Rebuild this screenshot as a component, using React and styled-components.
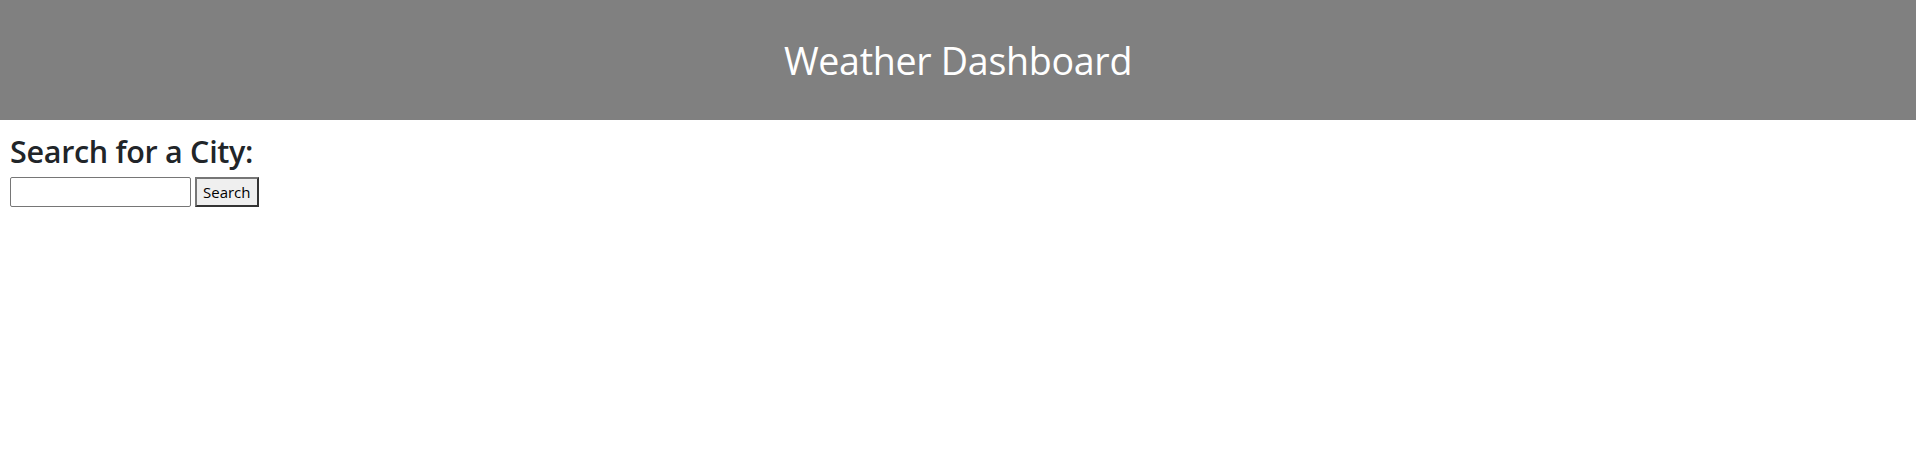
import React, { useState } from 'react';
import styled, { createGlobalStyle } from 'styled-components';

const GlobalStyle = createGlobalStyle`
  body {
    margin: 0;
    background: #fff;
    color: #212529;
    font-family: 'Open Sans', 'Noto Sans', sans-serif;
  }
`;

const Header = styled('header')`
  display: flex;
  justify-content: center;
  align-items: center;
  height: 120px;
  background: #808080;

  h1 {
    margin: 0;
    color: #fff;
    font-size: 37.6px;
    font-weight: 400;
    letter-spacing: -0.3px;
  }
`;

const SearchPanel = styled('section')`
  padding: 13px 10px 0 10px;

  h3 {
    margin: 0 0 7px;
    font-size: 30.5px;
    font-weight: 600;
    line-height: 1.2;
    letter-spacing: -0.3px;
  }
`;

const SearchRow = styled('form')`
  display: flex;
  gap: 4px;
  align-items: stretch;
`;

const CityInput = styled('input')`
  width: 181px;
  height: 30px;
  box-sizing: border-box;
  border: 1px solid #767676;
  border-radius: 2px;
  padding: 1px 2px;
  font-size: 13px;
`;

const SearchButton = styled('button')`
  height: 30px;
  box-sizing: border-box;
  padding: 0 6px;
  border: 2px solid #333;
  border-top-color: #767676;
  border-left-color: #767676;
  background: #efefef;
  color: #000;
  font-family: 'Open Sans', sans-serif;
  font-size: 15px;
`;

export default function App() {
  const [city, setCity] = useState('');

  return (
    <>
      <GlobalStyle />
      <Header>
        <h1>Weather Dashboard</h1>
      </Header>
      <SearchPanel>
        <h3>Search for a City:</h3>
        <SearchRow onSubmit={(e) => e.preventDefault()}>
          <CityInput value={city} onChange={(e) => setCity(e.target.value)} />
          <SearchButton type="submit">Search</SearchButton>
        </SearchRow>
      </SearchPanel>
    </>
  );
}
